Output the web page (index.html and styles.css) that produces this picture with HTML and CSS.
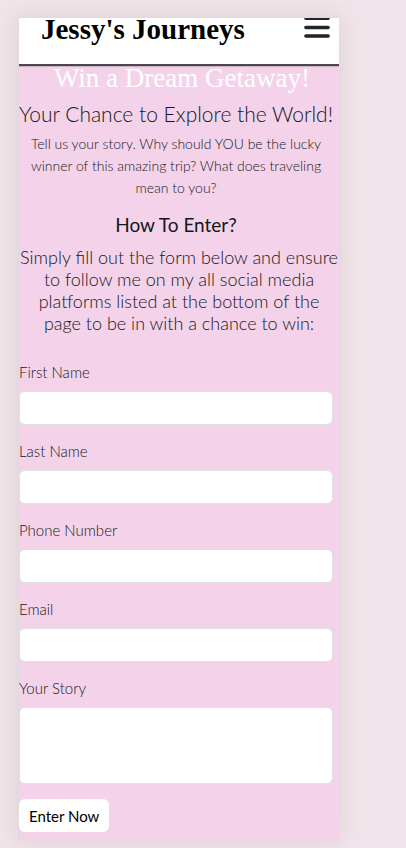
FILE: index.html
```html
<!DOCTYPE html>
<html lang="en">
<head>
<meta charset="utf-8">
<meta name="viewport" content="width=device-width, initial-scale=1">
<title>Jessy's Journeys</title>
<link rel="stylesheet" href="styles.css">
</head>
<body>
<div class="frame">
  <header class="header">
    <a class="brand" href="#">Jessy's Journeys</a>
    <button class="menu" type="button" aria-label="Menu">
      <svg width="26" height="21" viewBox="0 0 26 21" aria-hidden="true">
        <path d="M1.9 .3H24.1M1.9 9.4H24.1M1.9 18.1H24.1" stroke="#212529" stroke-width="3.5" stroke-linecap="round"/>
      </svg>
    </button>
  </header>
  <main>
    <section class="intro">
      <h1 class="title">Win a Dream Getaway!</h1>
      <h2 class="subtitle">Your Chance to Explore the World!</h2>
      <p class="text">Tell us your story. Why should YOU be the lucky winner of this amazing trip? What does traveling mean to you?</p>
      <h3 class="heading">How To Enter?</h3>
      <p class="lead">Simply fill out the form below and ensure to follow me on my all social media platforms listed at the bottom of the page to be in with a chance to win:</p>
    </section>
    <form class="form">
      <div class="field"><label for="first">First Name</label><input id="first" type="text"></div>
      <div class="field"><label for="last">Last Name</label><input id="last" type="text"></div>
      <div class="field"><label for="phone">Phone Number</label><input id="phone" type="tel"></div>
      <div class="field"><label for="email">Email</label><input id="email" type="email"></div>
      <div class="field"><label for="story">Your Story</label><textarea id="story"></textarea></div>
      <button class="submit" type="button">Enter Now</button>
    </form>
  </main>
</div>
</body>
</html>
```
FILE: styles.css
```css
* { box-sizing: border-box; }
body {
  margin: 0;
  padding: 17px 67px 9px 18px;
  background: #f1e4ea;
  color: #14171a;
  font-family: Lato, sans-serif;
  font-size: 15px;
  font-weight: 300;
  line-height: 22px;
}
h1, h2, h3, p { margin: 0; }
.frame {
  border: 1px solid #dedadf;
  border-right: 0;
  background: #f4d3ea;
  box-shadow: 0 0 24px rgba(140, 130, 120, .2);
}
.header {
  display: flex;
  justify-content: space-between;
  align-items: flex-start;
  height: 48px;
  padding: 0 9px 0 22px;
  background: #fff;
  border-bottom: 2px solid #4b484b;
  box-shadow: 0 1px 0 #c9b3c2;
}
.brand {
  color: #000;
  font: bold 29px/22px "Liberation Serif", serif;
  text-decoration: none;
}
.menu {
  display: flex;
  padding: 0;
  border: 0;
  background: none;
}
.intro { text-align: center; }
.title {
  padding-left: 6px;
  color: #fff;
  font: 27px/24px "Liberation Serif", serif;
}
.subtitle {
  margin: 13px 6px 8px 0;
  font-size: 21px;
  font-weight: 300;
  line-height: 22px;
}
.text { padding-right: 6px; font-size: 14px; }
.heading {
  margin: 15px 6px 10px 0;
  font-size: 19px;
  font-weight: 400;
  line-height: 22px;
}
.lead { font-size: 18px; }
.form {
  display: flex;
  flex-direction: column;
  gap: 15px;
  padding: 27px 6px 7px 0;
}
.field {
  display: flex;
  flex-direction: column;
  gap: 8px;
}
input, textarea {
  display: block;
  width: 100%;
  height: 34px;
  margin: 0;
  padding: 6px 12px;
  border: 1px solid #dee2e6;
  border-radius: 6px;
  background: #fff;
  font: inherit;
}
textarea {
  height: 77px;
  resize: none;
  background: linear-gradient(#555, #555) right bottom / 1px 2px no-repeat #fff;
}
.submit {
  align-self: flex-start;
  height: 33px;
  padding: 0 10px;
  border: 0;
  border-radius: 6px;
  background: #fff;
  color: #000;
  font: 400 15px/22px Lato, sans-serif;
}
```
